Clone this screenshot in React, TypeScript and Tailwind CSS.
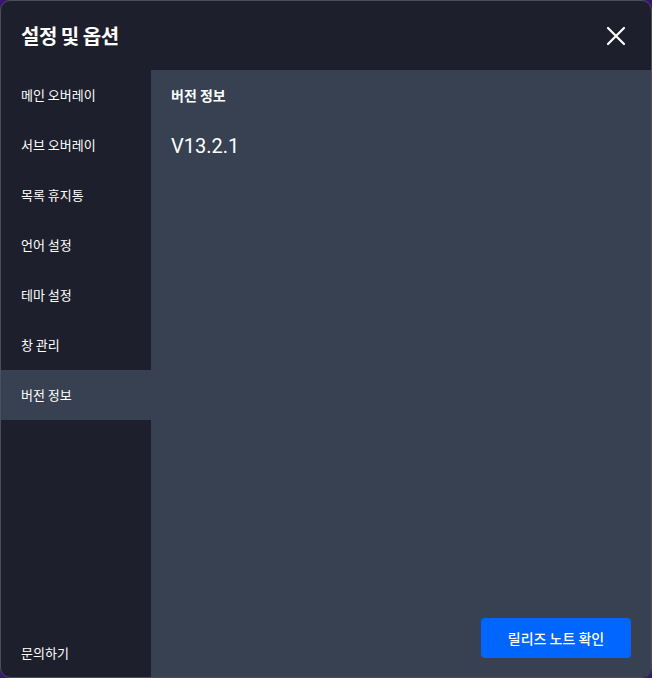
import React from "react";

const menu = [
  "메인 오버레이",
  "서브 오버레이",
  "목록 휴지통",
  "언어 설정",
  "테마 설정",
  "창 관리",
  "버전 정보",
];

const font = { fontFamily: '"Noto Sans CJK KR", "Noto Sans", sans-serif' };

export default function App() {
  const active = "버전 정보";
  return (
    <div className="w-[652px] h-[678px] bg-[#3b1670]" style={font}>
      <div className="w-full h-full flex flex-col overflow-hidden rounded-[10px] border border-[#4b4e5c] bg-[#1e1f2c] text-white">
        {/* header */}
        <div className="h-[69px] shrink-0 flex items-center justify-between pl-5 pr-[25px]">
          <h1 className="text-[20px] font-bold tracking-tight">설정 및 옵션</h1>
          <button className="text-white">
            <svg width="20" height="20" viewBox="0 0 20 20" fill="none">
              <path d="M2 2L18 18M18 2L2 18" stroke="currentColor" strokeWidth="2.2" strokeLinecap="round" />
            </svg>
          </button>
        </div>

        <div className="flex flex-1 min-h-0">
          {/* sidebar */}
          <aside className="w-[150px] shrink-0 flex flex-col">
            {menu.map((item) => (
              <div
                key={item}
                className={`h-[50px] flex items-center pl-5 text-[13px] ${
                  item === active ? "bg-[#374151]" : ""
                }`}
              >
                {item}
              </div>
            ))}
            <div className="mt-auto h-[50px] flex items-center pl-5 pt-[2px] text-[13px]">
              문의하기
            </div>
          </aside>

          {/* content */}
          <main className="flex-1 bg-[#374151] flex flex-col px-5">
            <div className="h-[50px] flex items-center text-[14px] font-bold">버전 정보</div>
            <div className="mt-[16px] text-[20px] leading-none" style={{ fontFamily: "Roboto, sans-serif" }}>
              V13.2.1
            </div>
            <div className="mt-auto flex justify-end pb-[19px]">
              <button className="w-[150px] h-[40px] rounded-[4px] bg-[#0066ff] text-[14px] font-medium">
                릴리즈 노트 확인
              </button>
            </div>
          </main>
        </div>
      </div>
    </div>
  );
}
